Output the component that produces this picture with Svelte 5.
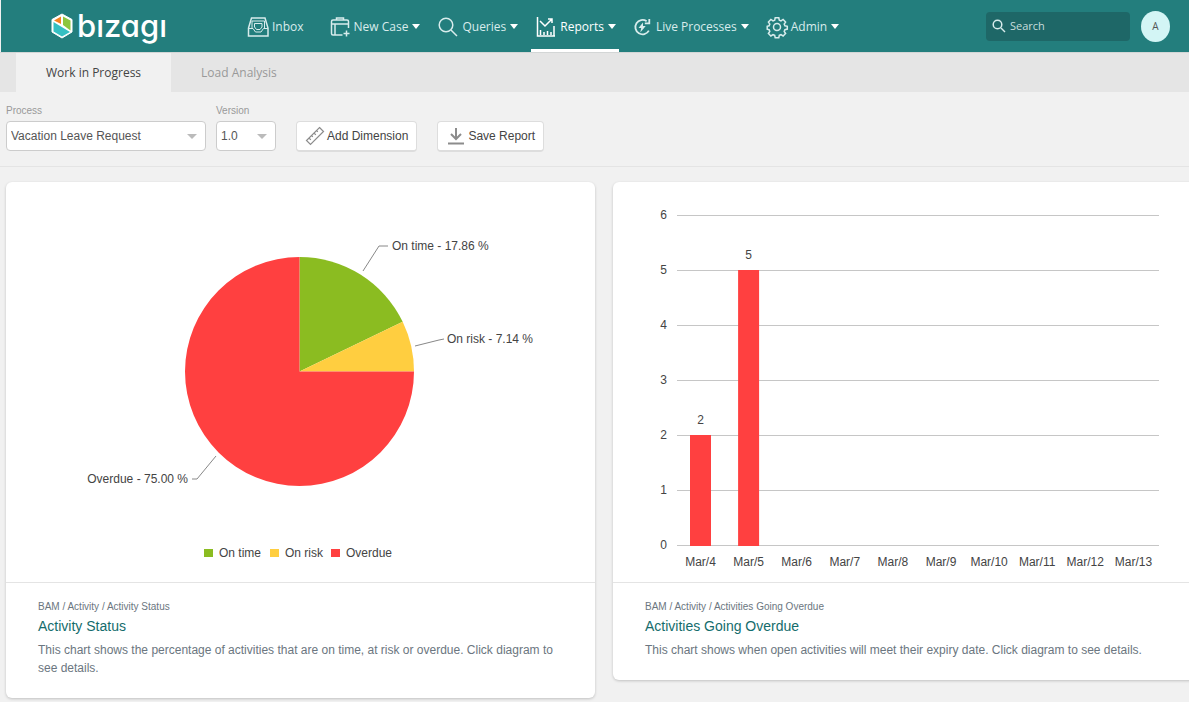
<script lang="ts">
	type NavItem = { id: string; label: string; menu: boolean };

	const navItems: NavItem[] = [
		{ id: 'inbox', label: 'Inbox', menu: false },
		{ id: 'new-case', label: 'New Case', menu: true },
		{ id: 'queries', label: 'Queries', menu: true },
		{ id: 'reports', label: 'Reports', menu: true },
		{ id: 'live', label: 'Live Processes', menu: true },
		{ id: 'admin', label: 'Admin', menu: true }
	];
	const tabs = ['Work in Progress', 'Load Analysis'];

	let activeNav = $state('reports');
	let activeTab = $state('Work in Progress');
	let process = $state('Vacation Leave Request');
	let version = $state('1.0');
	let query = $state('');

	const CX = 293.5;
	const CY = 189.5;
	const R = 114.5;

	const status = [
		{ name: 'On time', value: 17.86, color: '#8bbc21', line: '363,89 379,64 388,64', x: 386, y: 68, anchor: 'start', key: 198 },
		{ name: 'On risk', value: 7.14, color: '#ffce40', line: '409,164 433,158 438,157', x: 441, y: 161, anchor: 'start', key: 264 },
		{ name: 'Overdue', value: 75, color: '#ff4040', line: '210,274 191,297 186,297', x: 182, y: 301, anchor: 'end', key: 325 }
	].map((s) => (s.name === 'On time' ? { ...s, line: '357,89 373,64 382,64' } : s));

	function point(pct: number) {
		const a = (pct / 100) * Math.PI * 2;
		return `${CX + R * Math.sin(a)} ${CY - R * Math.cos(a)}`;
	}

	const slices = status.map((s, i) => {
		const from = status.slice(0, i).reduce((sum, p) => sum + p.value, 0);
		const large = s.value > 50 ? 1 : 0;
		return {
			...s,
			d: `M${CX} ${CY} L${point(from)} A${R} ${R} 0 ${large} 1 ${point(from + s.value)} Z`
		};
	});

	const UNIT = 55;
	const BASE = 364;
	const STEP = 48.1;
	const ticks = [0, 1, 2, 3, 4, 5, 6];
	const overdue = [2, 5, 0, 0, 0, 0, 0, 0, 0, 0].map((count, i) => ({
		label: `Mar/${i + 4}`,
		count,
		x: 87.5 + i * STEP
	}));
</script>

<header class="topbar">
	<a class="brand" href="#home" aria-label="bizagi">
		<svg width="22" height="26" viewBox="0 0 22 26" aria-hidden="true">
			<path d="M11 1 21 6.500V19L11 25 1 19V6.500Z" fill="#fff" stroke="#fff" stroke-linejoin="round" />
			<path d="M10 3.500V11L3 7.500Z" fill="#f58220" />
			<path d="M12 3.500 19.500 7.500V17.500L12 12Z" fill="#8dc63f" />
			<path d="M2.500 9 19 19 11 23.500 2.500 18.500Z" fill="#35bfc2" />
		</svg>
		<span>bızagı</span>
	</a>

	<nav class="menu" aria-label="Main">
		{#each navItems as item}
			<button
				type="button"
				class="menu-item {item.id}"
				class:active={activeNav === item.id}
				aria-haspopup={item.menu ? 'menu' : undefined}
				onclick={() => (activeNav = item.id)}
			>
				<svg class="icon" width="20" height="20" viewBox="0 0 20 20" aria-hidden="true">
					{#if item.id === 'inbox'}
						<path d="M3.500 1h13.500l3 10v8H.5v-8Z" />
						<path class="thin" d="M4 11V4h12.500v7M.5 11.500H5L7.500 15h5.500l2.500-3.500H20M6.500 10V6.500H14V10l-2 2.500H8.500Z" />
					{:else if item.id === 'new-case'}
						<path d="M12.500 18H3q-1.500 0-1.500-1.500v-12Q1.500 3 3 3h14q1.500 0 1.500 1.500V11M6.500 3V1h7v2M1.500 7h17M5 7v11M16.500 13.500v6M13.500 16.500h6" />
					{:else if item.id === 'queries'}
						<circle cx="8" cy="8" r="6.800" />
						<path d="m13 13 6 6" />
					{:else if item.id === 'reports'}
						<path d="M1.500 0v19H19M4.500 18v-5M8 18v-3M11.500 18v-4M15 18v-3M18 19V9M4 4l5 5 7-7M12 2h4v4" />
					{:else if item.id === 'live'}
						<path class="thick" d="M14 3.500A8 8 0 1 0 16.500 14M17 1v5h-5" />
						<path class="solid" d="m10 5-5 6h3l-1 5 6-7h-3Z" />
					{:else}
						<circle cx="10" cy="10" r="3.500" />
						<path d="M8.200.8h3.600l.5 2.400 1.700.7 2.100-1.400 2.500 2.600-1.400 2 .7 1.700 2.400.5v2.800l-2.400.6-.7 1.700 1.400 2.100-2.500 2.500-2.100-1.300-1.700.7-.5 2.400H8.200l-.5-2.400-1.700-.7L3.900 19 1.400 16.500l1.400-2.100-.7-1.700-1.900-.6V9.300l1.900-.5.7-1.700-1.400-2 2.500-2.600L6 3.900l1.700-.7Z" />
					{/if}
				</svg>
				<span>{item.label}</span>
				{#if item.menu}<i class="caret"></i>{/if}
			</button>
		{/each}
	</nav>

	<label class="search">
		<svg width="14" height="14" viewBox="0 0 14 14" aria-hidden="true">
			<circle cx="5.500" cy="5.500" r="4.300" />
			<path d="m9 9 4 4" />
		</svg>
		<input type="search" placeholder="Search" aria-label="Search" bind:value={query} />
	</label>
	<button type="button" class="avatar" aria-label="Account A">A</button>
</header>

<div class="tabs" role="tablist">
	{#each tabs as tab}
		<button
			type="button"
			role="tab"
			class="tab"
			class:selected={activeTab === tab}
			aria-selected={activeTab === tab}
			onclick={() => (activeTab = tab)}
		>
			{tab}
		</button>
	{/each}
</div>

<section class="filters">
	<div class="field process">
		<label for="process">Process</label>
		<div class="select">
			<select id="process" bind:value={process}>
				<option>Vacation Leave Request</option>
			</select>
		</div>
	</div>
	<div class="field version">
		<label for="version">Version</label>
		<div class="select">
			<select id="version" bind:value={version}>
				<option>1.0</option>
			</select>
		</div>
	</div>
	<button type="button" class="action">
		<svg width="20" height="20" viewBox="0 0 20 20" aria-hidden="true">
			<path d="M14.500 1.500 18.500 5.500 5.500 18.500 1.500 14.500ZM4 12l1.800 1.800M6.500 9.500l1.300 1.300M9 7l1.800 1.800M11.500 4.500l1.300 1.300" />
		</svg>
		Add Dimension
	</button>
	<button type="button" class="action">
		<svg class="save" width="20" height="20" viewBox="0 0 20 20" aria-hidden="true">
			<path d="M10 2v10M5 8l5 5 5-5M2 17.500h16" />
		</svg>
		Save Report
	</button>
</section>

<main class="cards">
	<article class="card">
		<svg class="chart" viewBox="0 0 589 400" role="img" aria-label="Activity Status">
			{#each slices as s}
				<path d={s.d} fill={s.color} />
				<polyline points={s.line} />
				<text x={s.x} y={s.y} text-anchor={s.anchor}>{s.name} - {s.value.toFixed(2)} %</text>
				<rect x={s.key} y="367" width="9" height="8" fill={s.color} />
				<text x={s.key + 15} y="375">{s.name}</text>
			{/each}
		</svg>
		<div class="info">
			<p class="path">BAM / Activity / Activity Status</p>
			<h2><a href="#activity-status">Activity Status</a></h2>
			<p>
				This chart shows the percentage of activities that are on time, at risk or overdue. Click
				diagram to see details.
			</p>
		</div>
	</article>

	<article class="card">
		<svg class="chart" viewBox="0 0 589 400" role="img" aria-label="Activities Going Overdue">
			{#each ticks as t}
				<path class="grid" d="M64 {BASE - t * UNIT - 0.5}H546" />
				<text x="54" y={BASE - t * UNIT + 3} text-anchor="end">{t}</text>
			{/each}
			{#each overdue as day}
				{#if day.count}
					<rect x={day.x - 10.5} y={BASE - day.count * UNIT - 1} width="21" height={day.count * UNIT + 1} fill="#ff4040" />
					<text x={day.x} y={BASE - day.count * UNIT - 12} text-anchor="middle">{day.count}</text>
				{/if}
				<text x={day.x} y="384" text-anchor="middle">{day.label}</text>
			{/each}
		</svg>
		<div class="info">
			<p class="path">BAM / Activity / Activities Going Overdue</p>
			<h2><a href="#going-overdue">Activities Going Overdue</a></h2>
			<p>
				This chart shows when open activities will meet their expiry date. Click diagram to see
				details.
			</p>
		</div>
	</article>
</main>

<style>
	:global(body) {
		background: #f1f1f1;
		color: #444;
		font: 12px/18px 'Liberation Sans', Arial, sans-serif;
		overflow-x: hidden;
	}
	:global(*) {
		box-sizing: border-box;
	}
	button,
	input,
	select {
		font: inherit;
		color: inherit;
		border: 0;
		margin: 0;
		padding: 0;
		background: none;
	}
	button {
		cursor: pointer;
	}

	.topbar {
		display: flex;
		align-items: center;
		height: 52px;
		padding: 0 19px 0 50px;
		border-left: 1px solid #f1f1f1;
		background: #237e7d;
		color: #d8ecec;
		font: 500 12px/18px 'Open Sans', 'Noto Sans', sans-serif;
	}
	.brand {
		display: flex;
		align-items: center;
		gap: 4px;
		width: 192px;
		height: 46px;
		color: #fff;
		font: 500 31px/36px Inter, sans-serif;
		font-feature-settings: 'cv11';
		text-decoration: none;
	}
	.menu {
		display: flex;
		flex: 1;
		align-self: stretch;
		gap: 10px;
	}
	.menu-item {
		display: flex;
		align-items: center;
		gap: 4px;
		padding: 4px 3px 0 5px;
		border-bottom: 3px solid transparent;
		white-space: nowrap;
	}
	.menu-item.active {
		border-bottom-color: #fff;
		color: #fff;
	}
	.inbox {
		margin-right: 8px;
	}
	.icon {
		fill: none;
		stroke: currentColor;
		stroke-width: 1.5;
		overflow: visible;
	}
	.live .icon {
		width: 18px;
	}
	.thin {
		stroke-width: 1;
	}
	.thick {
		stroke-width: 2;
	}
	.solid {
		fill: currentColor;
		stroke: none;
	}
	.caret {
		border: 4px solid transparent;
		border-top: 5px solid #fff;
		border-bottom: 0;
	}
	.search {
		display: flex;
		align-items: center;
		gap: 4px;
		width: 144px;
		height: 29px;
		padding: 0 6px;
		border-radius: 4px;
		background: #1e6767;
	}
	.search svg {
		flex: none;
		fill: none;
		stroke: currentColor;
		stroke-width: 1.5;
	}
	.search input {
		width: 100%;
		min-width: 0;
		outline: 0;
		appearance: none;
		font-size: 11px;
	}
	.search input::placeholder {
		color: #c8dede;
		opacity: 1;
	}
	.avatar {
		width: 29px;
		height: 31px;
		margin-left: 11px;
		border-radius: 50%;
		background: #d3f5f5;
		color: #555;
		font-size: 10px;
	}

	.tabs {
		display: flex;
		height: 40px;
		padding-left: 16px;
		border-top: 1px solid #d3d6d6;
		background: #e5e5e5;
		font: 12px/18px 'Open Sans', 'Noto Sans', sans-serif;
	}
	.tab {
		padding: 0 30px;
		color: #999;
	}
	.tab.selected {
		background: #f1f1f1;
		color: #444;
	}

	.filters {
		display: flex;
		align-items: flex-end;
		gap: 20px;
		padding: 10px 6px 15px;
		border-bottom: 1px solid #e4e4e4;
	}
	.field label {
		display: block;
		height: 19px;
		color: #999;
		font-size: 10px;
	}
	.process {
		width: 200px;
		margin-right: -10px;
	}
	.version {
		width: 60px;
	}
	.select {
		position: relative;
	}
	.select::after {
		content: '';
		position: absolute;
		top: 13px;
		right: 9px;
		border: 5px solid transparent;
		border-top-color: #bbb;
		border-bottom: 0;
		pointer-events: none;
	}
	.select select {
		display: block;
		width: 100%;
		height: 30px;
		padding-left: 4px;
		border: 1px solid #ccc;
		border-radius: 4px;
		background: #fff;
		color: #555;
		appearance: none;
	}
	.action {
		display: flex;
		align-items: center;
		gap: 2px;
		height: 31px;
		margin-bottom: -1px;
		padding: 0 8px 1px;
		border: 1px solid #ddd;
		border-bottom-width: 2px;
		border-radius: 4px;
		background: #fff;
		white-space: nowrap;
	}
	.action svg {
		fill: none;
		stroke: #8c8c8c;
		stroke-width: 1.2;
	}
	.action .save {
		stroke-width: 2;
	}

	/* the second card runs on past the right edge */
	.cards {
		display: grid;
		grid-template-columns: 1fr 1fr;
		align-items: start;
		gap: 18px;
		margin: 15px -13px 4px 6px;
	}
	.card {
		border-radius: 6px;
		background: #fff;
		box-shadow: 0 1px 3px rgba(0, 0, 0, 0.2);
	}
	.chart {
		display: block;
		width: 100%;
	}
	.chart text {
		fill: #444;
	}
	.chart polyline {
		fill: none;
		stroke: #888;
	}
	.grid {
		stroke: #c6c6c6;
	}
	.info {
		padding: 15px 32px 21px;
		border-top: 1px solid #e4e4e4;
		color: #6b7680;
	}
	.info p {
		margin: 0;
	}
	.info .path {
		font-size: 10px;
	}
	h2 {
		margin: 0 0 4px;
		font-size: 14px;
		font-weight: normal;
		line-height: 21px;
	}
	h2 a {
		color: #146c6c;
		text-decoration: none;
	}
</style>
